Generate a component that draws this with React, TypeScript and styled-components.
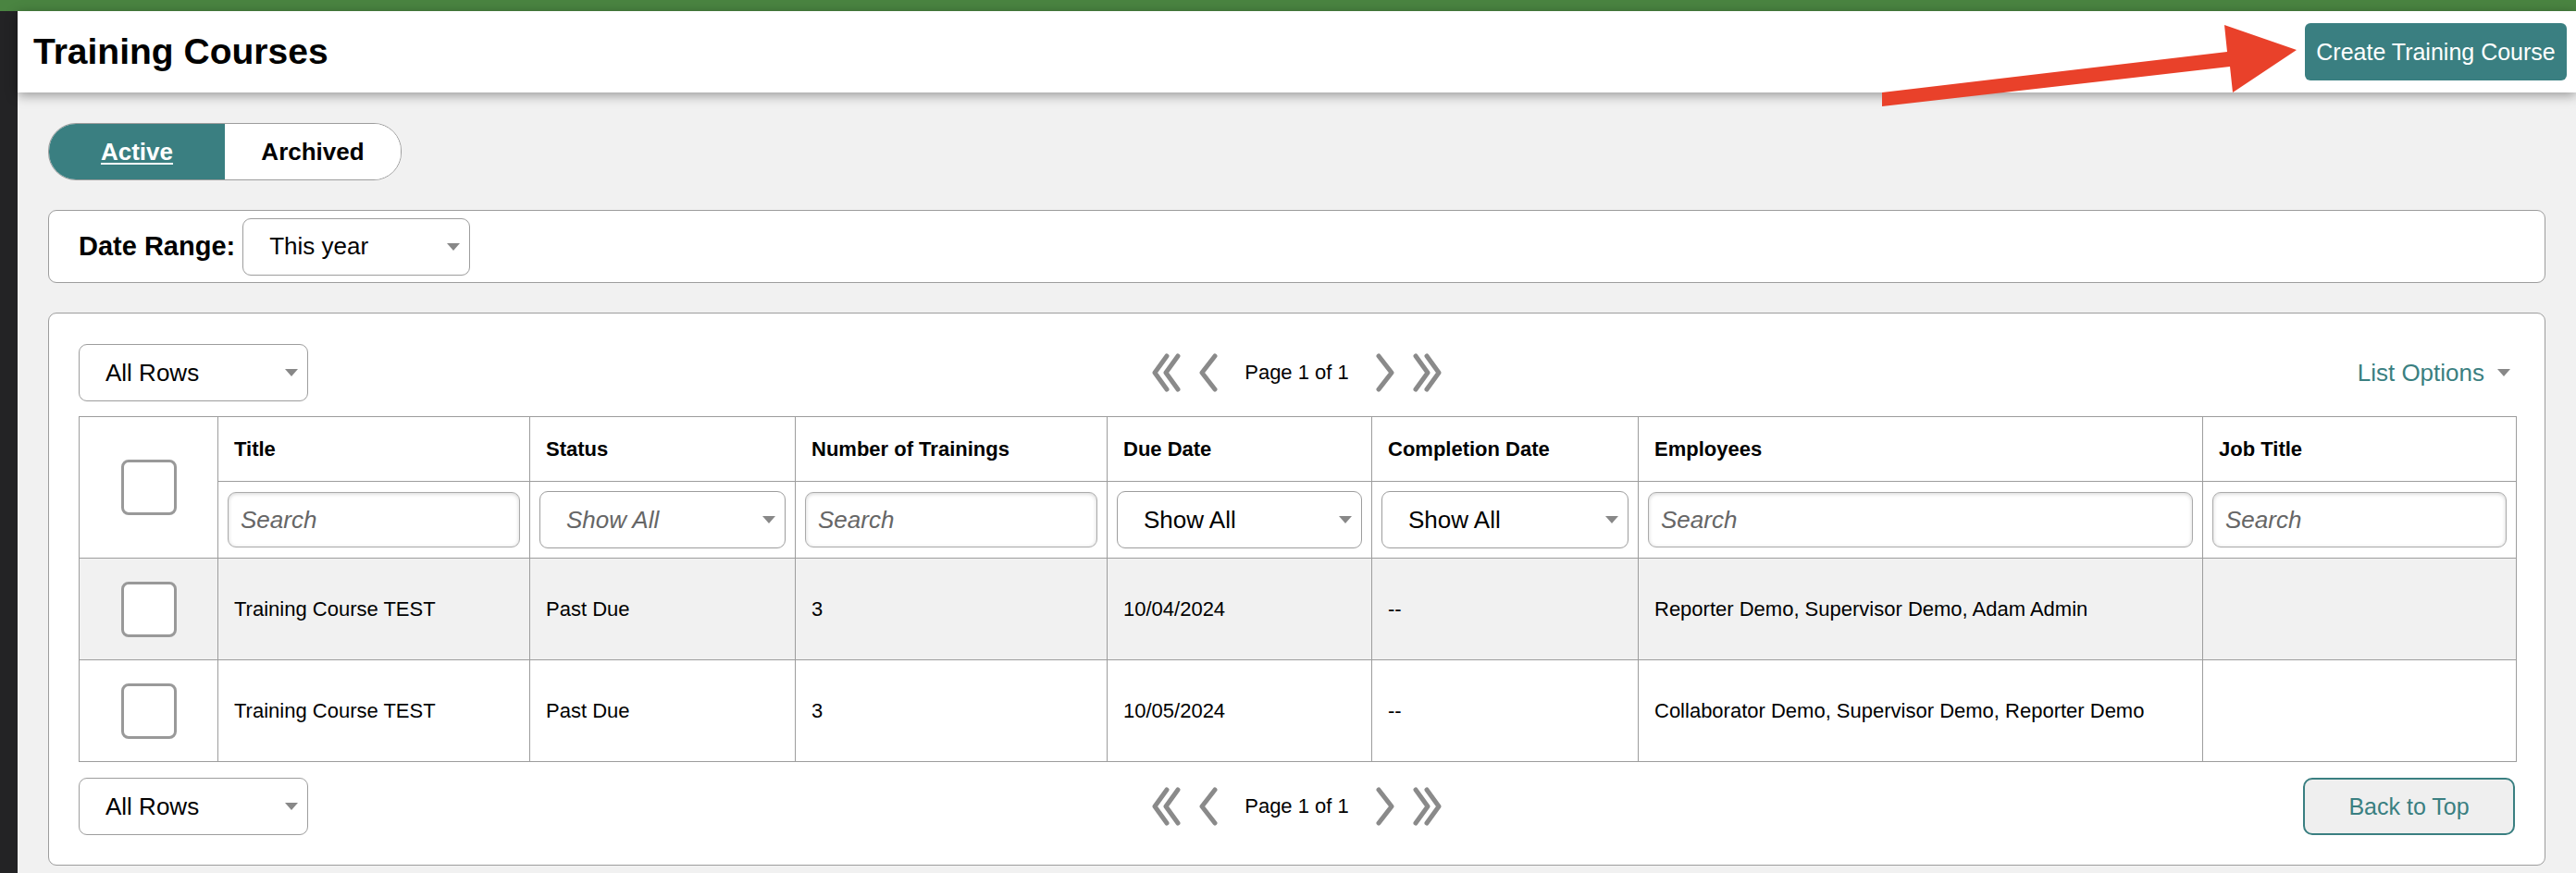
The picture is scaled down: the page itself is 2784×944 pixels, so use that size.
import React from 'react';
import styled, { createGlobalStyle } from 'styled-components';

const TEAL = '#3a7f81';
const LINE = '#9d9d9d';

const GlobalStyle = createGlobalStyle`
  html, body {
    margin: 0;
    padding: 0;
  }
  body {
    background: #f1f1f1;
    font-family: 'Liberation Sans', Arial, Helvetica, sans-serif;
    color: #000;
  }
`;

interface Course {
    title: string;
    status: string;
    trainings: number;
    dueDate: string;
    completionDate: string;
    employees: string;
    jobTitle: string;
}

const courses: Course[] = [
    {
        title: 'Training Course TEST',
        status: 'Past Due',
        trainings: 3,
        dueDate: '10/04/2024',
        completionDate: '--',
        employees: 'Reporter Demo, Supervisor Demo, Adam Admin',
        jobTitle: '',
    },
    {
        title: 'Training Course TEST',
        status: 'Past Due',
        trainings: 3,
        dueDate: '10/05/2024',
        completionDate: '--',
        employees: 'Collaborator Demo, Supervisor Demo, Reporter Demo',
        jobTitle: '',
    },
];

const columnWidths = [150, 337, 287, 337, 286, 288, 610, 339];

const Chevrons: React.FunctionComponent<{ dir: 'left' | 'right'; double?: boolean }> = ({
    dir,
    double,
}) => {
    const width = double ? 34 : 22;
    const lines = double
        ? ['17,3 4,21 17,39', '29,3 16,21 29,39']
        : ['18,3 4,21 18,39'];
    return (
        <ChevronSvg
            width={width}
            height={42}
            viewBox={`0 0 ${width} 42`}
            style={dir === 'right' ? { transform: 'scaleX(-1)' } : undefined}
        >
            {lines.map(points => (
                <polyline key={points} points={points} />
            ))}
        </ChevronSvg>
    );
};

const Pager: React.FunctionComponent = () => (
    <PagerRoot>
        <Chevrons dir="left" double />
        <Chevrons dir="left" />
        <PageText>Page 1 of 1</PageText>
        <Chevrons dir="right" />
        <Chevrons dir="right" double />
    </PagerRoot>
);

const Select: React.FunctionComponent<{
    label: string;
    width?: number;
    $muted?: boolean;
}> = ({ label, width, $muted }) => (
    <SelectBox style={width ? { width } : undefined}>
        <SelectLabel $muted={$muted}>{label}</SelectLabel>
        <Caret />
    </SelectBox>
);

export default function App() {
    return (
        <>
            <GlobalStyle />
            <TopBar />
            <Shell>
                <Sidebar />
                <Main>
                    <Header>
                        <PageTitle>Training Courses</PageTitle>
                        <PrimaryButton>Create Training Course</PrimaryButton>
                        <Arrow width={452} height={90} viewBox="0 0 452 90">
                            <polygon points="0,73 373,29 370,0 448,27 379,73 376,45 0,88" />
                        </Arrow>
                    </Header>
                    <Content>
                        <Toggle>
                            <ToggleItem $active>Active</ToggleItem>
                            <ToggleItem>Archived</ToggleItem>
                        </Toggle>

                        <FilterCard>
                            <FilterLabel>Date Range:</FilterLabel>
                            <Select label="This year" width={246} />
                        </FilterCard>

                        <TableCard>
                            <Toolbar>
                                <Select label="All Rows" width={248} />
                                <Pager />
                                <ListOptions>
                                    List Options <Caret />
                                </ListOptions>
                            </Toolbar>

                            <Table>
                                <colgroup>
                                    {columnWidths.map((w, i) => (
                                        <col key={i} style={{ width: w }} />
                                    ))}
                                </colgroup>
                                <thead>
                                    <HeadRow>
                                        <CheckCell rowSpan={2}>
                                            <Checkbox />
                                        </CheckCell>
                                        <HeadCell>Title</HeadCell>
                                        <HeadCell>Status</HeadCell>
                                        <HeadCell>Number of Trainings</HeadCell>
                                        <HeadCell>Due Date</HeadCell>
                                        <HeadCell>Completion Date</HeadCell>
                                        <HeadCell>Employees</HeadCell>
                                        <HeadCell>Job Title</HeadCell>
                                    </HeadRow>
                                    <SearchRow>
                                        <SearchCell>
                                            <SearchInput placeholder="Search" />
                                        </SearchCell>
                                        <SearchCell>
                                            <Select label="Show All" $muted />
                                        </SearchCell>
                                        <SearchCell>
                                            <SearchInput placeholder="Search" />
                                        </SearchCell>
                                        <SearchCell>
                                            <Select label="Show All" />
                                        </SearchCell>
                                        <SearchCell>
                                            <Select label="Show All" />
                                        </SearchCell>
                                        <SearchCell>
                                            <SearchInput placeholder="Search" />
                                        </SearchCell>
                                        <SearchCell>
                                            <SearchInput placeholder="Search" />
                                        </SearchCell>
                                    </SearchRow>
                                </thead>
                                <tbody>
                                    {courses.map((course, i) => (
                                        <BodyRow key={i} $striped={i % 2 === 0}>
                                            <CheckCell>
                                                <Checkbox />
                                            </CheckCell>
                                            <BodyCell>{course.title}</BodyCell>
                                            <BodyCell>{course.status}</BodyCell>
                                            <BodyCell>{course.trainings}</BodyCell>
                                            <BodyCell>{course.dueDate}</BodyCell>
                                            <BodyCell>{course.completionDate}</BodyCell>
                                            <BodyCell>{course.employees}</BodyCell>
                                            <BodyCell>{course.jobTitle}</BodyCell>
                                        </BodyRow>
                                    ))}
                                </tbody>
                            </Table>

                            <Toolbar $bottom>
                                <Select label="All Rows" width={248} />
                                <Pager />
                                <SecondaryButton>Back to Top</SecondaryButton>
                            </Toolbar>
                        </TableCard>
                    </Content>
                </Main>
            </Shell>
        </>
    );
}

const TopBar = styled.div`
    height: 12px;
    background: #4a8441;
`;

const Shell = styled.div`
    display: flex;
    min-height: 932px;
`;

const Sidebar = styled.div`
    width: 19px;
    flex: none;
    background: #232325;
`;

const Main = styled.div`
    flex: 1;
    min-width: 0;
    display: flex;
    flex-direction: column;
`;

const Header = styled.header`
    position: relative;
    z-index: 2;
    height: 88px;
    display: flex;
    align-items: center;
    justify-content: space-between;
    padding: 0 10px 0 17px;
    background: #fff;
    box-shadow: 0 3px 12px rgba(0, 0, 0, 0.38);
`;

const PageTitle = styled.h1`
    margin: 0;
    font-size: 39px;
    font-weight: 700;
`;

const PrimaryButton = styled.button`
    width: 283px;
    height: 62px;
    border: none;
    border-radius: 6px;
    background: ${TEAL};
    color: #fff;
    font-family: inherit;
    font-size: 25px;
`;

const Arrow = styled.svg`
    position: absolute;
    left: 2015px;
    top: 15px;
    overflow: visible;
    pointer-events: none;

    polygon {
        fill: #e9412a;
    }
`;

const Content = styled.main`
    display: flex;
    flex-direction: column;
    align-items: flex-start;
    gap: 32px;
    padding: 33px;
`;

const Toggle = styled.div`
    display: flex;
    height: 60px;
    border: 1px solid ${LINE};
    border-radius: 30px;
    overflow: hidden;
    background: #fff;
`;

const ToggleItem = styled.div<{ $active?: boolean }>`
    width: 190px;
    display: flex;
    align-items: center;
    justify-content: center;
    font-size: 26px;
    font-weight: 700;
    background: ${p => (p.$active ? TEAL : '#fff')};
    color: ${p => (p.$active ? '#fff' : '#000')};
    text-decoration: ${p => (p.$active ? 'underline' : 'none')};
    text-underline-offset: 3px;
`;

const Card = styled.section`
    align-self: stretch;
    background: #fff;
    border: 1px solid ${LINE};
    border-radius: 9px;
`;

const FilterCard = styled(Card)`
    height: 79px;
    box-sizing: border-box;
    display: flex;
    align-items: center;
    gap: 8px;
    padding-left: 32px;
`;

const FilterLabel = styled.span`
    font-size: 29px;
    font-weight: 700;
`;

const TableCard = styled(Card)`
    padding: 33px 32px 32px;
`;

const Toolbar = styled.div<{ $bottom?: boolean }>`
    display: grid;
    grid-template-columns: 1fr auto 1fr;
    align-items: center;
    margin: ${p => (p.$bottom ? '17px 0 0' : '0 0 16px')};

    & > :last-child {
        justify-self: end;
    }
`;

const SelectBox = styled.div`
    height: 62px;
    box-sizing: border-box;
    display: flex;
    align-items: center;
    justify-content: space-between;
    padding: 0 10px 0 28px;
    background: #fff;
    border: 1px solid ${LINE};
    border-radius: 9px;
`;

const SelectLabel = styled.span<{ $muted?: boolean }>`
    font-size: 26px;
    font-style: ${p => (p.$muted ? 'italic' : 'normal')};
    color: ${p => (p.$muted ? '#666' : '#000')};
    white-space: nowrap;
`;

const Caret = styled.span`
    display: inline-block;
    width: 0;
    height: 0;
    border-left: 7px solid transparent;
    border-right: 7px solid transparent;
    border-top: 8px solid #888;
`;

const PagerRoot = styled.div`
    display: flex;
    align-items: center;
    gap: 17px;
`;

const ChevronSvg = styled.svg`
    polyline {
        fill: none;
        stroke: #8a8a8a;
        stroke-width: 5;
        stroke-linecap: round;
        stroke-linejoin: round;
    }
`;

const PageText = styled.span`
    margin: 0 11px;
    font-size: 22px;
`;

const ListOptions = styled.div`
    display: flex;
    align-items: center;
    gap: 14px;
    padding-right: 5px;
    color: ${TEAL};
    font-size: 26px;
`;

const Table = styled.table`
    width: 100%;
    table-layout: fixed;
    border-collapse: collapse;
    border: 1px solid ${LINE};

    th,
    td {
        border: 1px solid ${LINE};
    }
`;

const HeadRow = styled.tr`
    height: 70px;
`;

const SearchRow = styled.tr`
    height: 83px;
`;

const BodyRow = styled.tr<{ $striped?: boolean }>`
    height: 110px;
    background: ${p => (p.$striped ? '#f1f1f1' : '#fff')};
`;

const HeadCell = styled.th`
    padding: 0 17px;
    text-align: left;
    font-size: 22px;
    font-weight: 700;
    white-space: nowrap;
`;

const SearchCell = styled.th`
    padding: 0 10px;
    font-weight: 400;
    text-align: left;
`;

const CheckCell = styled.td`
    background: #fff;
    text-align: center;
    vertical-align: middle;

    tr:nth-child(odd) > & {
        background: inherit;
    }
`;

const Checkbox = styled.span`
    display: inline-block;
    vertical-align: middle;
    width: 60px;
    height: 60px;
    box-sizing: border-box;
    border: 3px solid #999;
    border-radius: 8px;
    background: #fff;
`;

const SearchInput = styled.input`
    display: block;
    width: 100%;
    height: 60px;
    box-sizing: border-box;
    padding: 0 13px;
    border: 1px solid #aaa;
    border-radius: 9px;
    box-shadow: inset 0 1px 4px rgba(0, 0, 0, 0.18);
    font-family: inherit;
    font-size: 26px;

    &::placeholder {
        color: #666;
        font-style: italic;
    }
`;

const BodyCell = styled.td`
    padding: 0 17px;
    font-size: 22px;
    white-space: nowrap;
`;

const SecondaryButton = styled.button`
    width: 229px;
    height: 62px;
    border: 2px solid ${TEAL};
    border-radius: 10px;
    background: #efefef;
    color: ${TEAL};
    font-family: inherit;
    font-size: 25px;
`;
